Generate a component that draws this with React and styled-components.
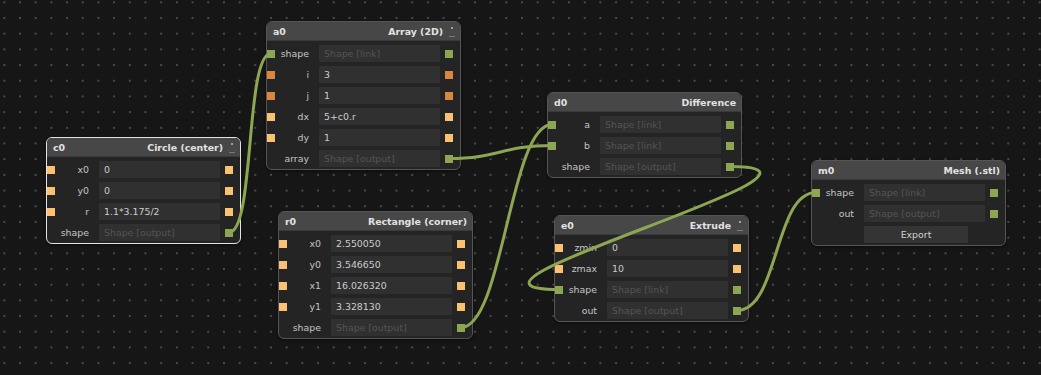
import React from "react";
import styled, { createGlobalStyle } from "styled-components";

const Global = createGlobalStyle`
  html, body { margin: 0; padding: 0; background: #161616; overflow: hidden; }
  #root { width: 1041px; height: 375px; }
`;

const Canvas = styled.div`
  position: relative;
  width: 1041px;
  height: 375px;
  background-color: #161616;
  background-image: radial-gradient(circle, #4a4a4a 0.7px, transparent 1px);
  background-size: 15.7px 15.7px;
  background-position: -3.55px -5.55px;
  font-family: "DejaVu Sans", "Liberation Sans", sans-serif;
  overflow: hidden;
`;

const Node = styled.div`
  position: absolute;
  width: 195px;
  box-sizing: border-box;
  background: #242424;
  border: 1px solid ${(p) => (p.$selected ? "#e4e4e4" : "#555")};
  border-radius: 6px;
  overflow: hidden;
  box-shadow: 0 1px 3px rgba(0, 0, 0, 0.5);
`;

const Header = styled.div`
  height: 19px;
  background: #474747;
  display: flex;
  align-items: center;
  justify-content: space-between;
  padding: 0 5px 0 6px;
  font-size: 9.4px;
  font-weight: bold;
  color: #e2e2e2;
  border-bottom: 1px solid #3a3a3a;
  box-sizing: border-box;
`;

const Title = styled.div`
  display: flex;
  align-items: center;
  gap: 6px;
`;

const Handle = styled.div`
  width: 6px;
  height: 12px;
  display: flex;
  flex-direction: column;
  align-items: center;
  justify-content: space-between;
  padding-top: 2px;
  box-sizing: border-box;
  &::before {
    content: "";
    width: 2px;
    height: 2px;
    background: #a0a0a0;
  }
  &::after {
    content: "";
    width: 6px;
    height: 1.5px;
    background: #7a7a7a;
  }
`;

const Body = styled.div`
  display: flex;
  flex-direction: column;
  gap: 4px;
  padding: 4px 0 2px;
`;

const Row = styled.div`
  display: flex;
  align-items: center;
  height: 17px;
  font-size: 9.4px;
`;

const portColors = {
  shape: "#8da653",
  int: "#d9873f",
  float: "#fbc173",
};

const Port = styled.div`
  width: 8px;
  height: 8px;
  flex: none;
  background: ${(p) => portColors[p.$kind]};
  visibility: ${(p) => (p.$hidden ? "hidden" : "visible")};
`;

const Label = styled.div`
  width: 34px;
  flex: none;
  text-align: right;
  color: #c4c4c4;
  margin-right: 10px;
  white-space: nowrap;
`;

const Field = styled.div`
  width: 121px;
  height: 17px;
  flex: none;
  box-sizing: border-box;
  background: #303030;
  padding-left: 5px;
  display: flex;
  align-items: center;
  color: ${(p) => (p.$dim ? "#545454" : "#cdcdcd")};
  margin-right: 5px;
  white-space: nowrap;
`;

const ButtonRow = styled.div`
  display: flex;
  height: 17px;
  padding-left: 52px;
`;

const Button = styled.div`
  width: 104px;
  height: 17px;
  background: #343434;
  color: #d0d0d0;
  font-size: 9.4px;
  display: flex;
  align-items: center;
  justify-content: center;
`;

const Wires = styled.svg`
  position: absolute;
  left: 0;
  top: 0;
  pointer-events: none;
`;

const nodes = [
  {
    id: "a0", title: "Array (2D)", x: 266, y: 21, handle: true,
    rows: [
      { label: "shape", value: "Shape [link]", dim: true, kind: "shape" },
      { label: "i", value: "3", kind: "int" },
      { label: "j", value: "1", kind: "int" },
      { label: "dx", value: "5+c0.r", kind: "float" },
      { label: "dy", value: "1", kind: "float" },
      { label: "array", value: "Shape [output]", dim: true, kind: "shape", noIn: true },
    ],
  },
  {
    id: "c0", title: "Circle (center)", x: 46, y: 137, handle: true, selected: true,
    rows: [
      { label: "x0", value: "0", kind: "float" },
      { label: "y0", value: "0", kind: "float" },
      { label: "r", value: "1.1*3.175/2", kind: "float" },
      { label: "shape", value: "Shape [output]", dim: true, kind: "shape", noIn: true },
    ],
  },
  {
    id: "d0", title: "Difference", x: 547, y: 92,
    rows: [
      { label: "a", value: "Shape [link]", dim: true, kind: "shape" },
      { label: "b", value: "Shape [link]", dim: true, kind: "shape" },
      { label: "shape", value: "Shape [output]", dim: true, kind: "shape", noIn: true },
    ],
  },
  {
    id: "r0", title: "Rectangle (corner)", x: 278, y: 211,
    rows: [
      { label: "x0", value: "2.550050", kind: "float" },
      { label: "y0", value: "3.546650", kind: "float" },
      { label: "x1", value: "16.026320", kind: "float" },
      { label: "y1", value: "3.328130", kind: "float" },
      { label: "shape", value: "Shape [output]", dim: true, kind: "shape", noIn: true },
    ],
  },
  {
    id: "e0", title: "Extrude", x: 554, y: 215, handle: true,
    rows: [
      { label: "zmin", value: "0", kind: "float" },
      { label: "zmax", value: "10", kind: "float" },
      { label: "shape", value: "Shape [link]", dim: true, kind: "shape" },
      { label: "out", value: "Shape [output]", dim: true, kind: "shape", noIn: true },
    ],
  },
  {
    id: "m0", title: "Mesh (.stl)", x: 811, y: 160, button: "Export",
    rows: [
      { label: "shape", value: "Shape [link]", dim: true, kind: "shape" },
      { label: "out", value: "Shape [output]", dim: true, kind: "shape", noIn: true },
    ],
  },
];

const byId = Object.fromEntries(nodes.map((n) => [n.id, n]));
const rowY = (n, i) => n.y + 24 + 8.5 + 21 * i;
const inPt = (id, i) => [byId[id].x + 5, rowY(byId[id], i)];
const outPt = (id, i) => [byId[id].x + 183, rowY(byId[id], i)];

const links = [
  { from: outPt("c0", 3), to: inPt("a0", 0), d: 26 },
  { from: outPt("a0", 5), to: inPt("d0", 1), d: 50 },
  { from: outPt("r0", 4), to: inPt("d0", 0), d: 42 },
  { from: outPt("d0", 2), to: inPt("e0", 2), d: 150 },
  { from: outPt("e0", 3), to: inPt("m0", 0), d: 42 },
];

function wirePath({ from, to, d }) {
  const [x0, y0] = from;
  const [x1, y1] = to;
  return `M ${x0} ${y0} C ${x0 + d} ${y0}, ${x1 - d} ${y1}, ${x1} ${y1}`;
}

function GraphNode({ node }) {
  return (
    <Node $selected={node.selected} style={{ left: node.x, top: node.y }}>
      <Header>
        <span>{node.id}</span>
        <Title>
          <span>{node.title}</span>
          {node.handle && <Handle />}
        </Title>
      </Header>
      <Body>
        {node.rows.map((r) => (
          <Row key={r.label}>
            <Port $kind={r.kind} $hidden={r.noIn} />
            <Label>{r.label}</Label>
            <Field $dim={r.dim}>{r.value}</Field>
            <Port $kind={r.kind} />
          </Row>
        ))}
        {node.button && (
          <ButtonRow>
            <Button>{node.button}</Button>
          </ButtonRow>
        )}
      </Body>
    </Node>
  );
}

export default function App() {
  return (
    <>
      <Global />
      <Canvas>
        {nodes.map((n) => (
          <GraphNode key={n.id} node={n} />
        ))}
        <Wires width="1041" height="375" viewBox="0 0 1041 375">
          {links.map((l, i) => (
            <path
              key={i}
              d={wirePath(l)}
              fill="none"
              stroke="#8da653"
              strokeWidth="3"
              strokeLinecap="round"
            />
          ))}
        </Wires>
      </Canvas>
    </>
  );
}
